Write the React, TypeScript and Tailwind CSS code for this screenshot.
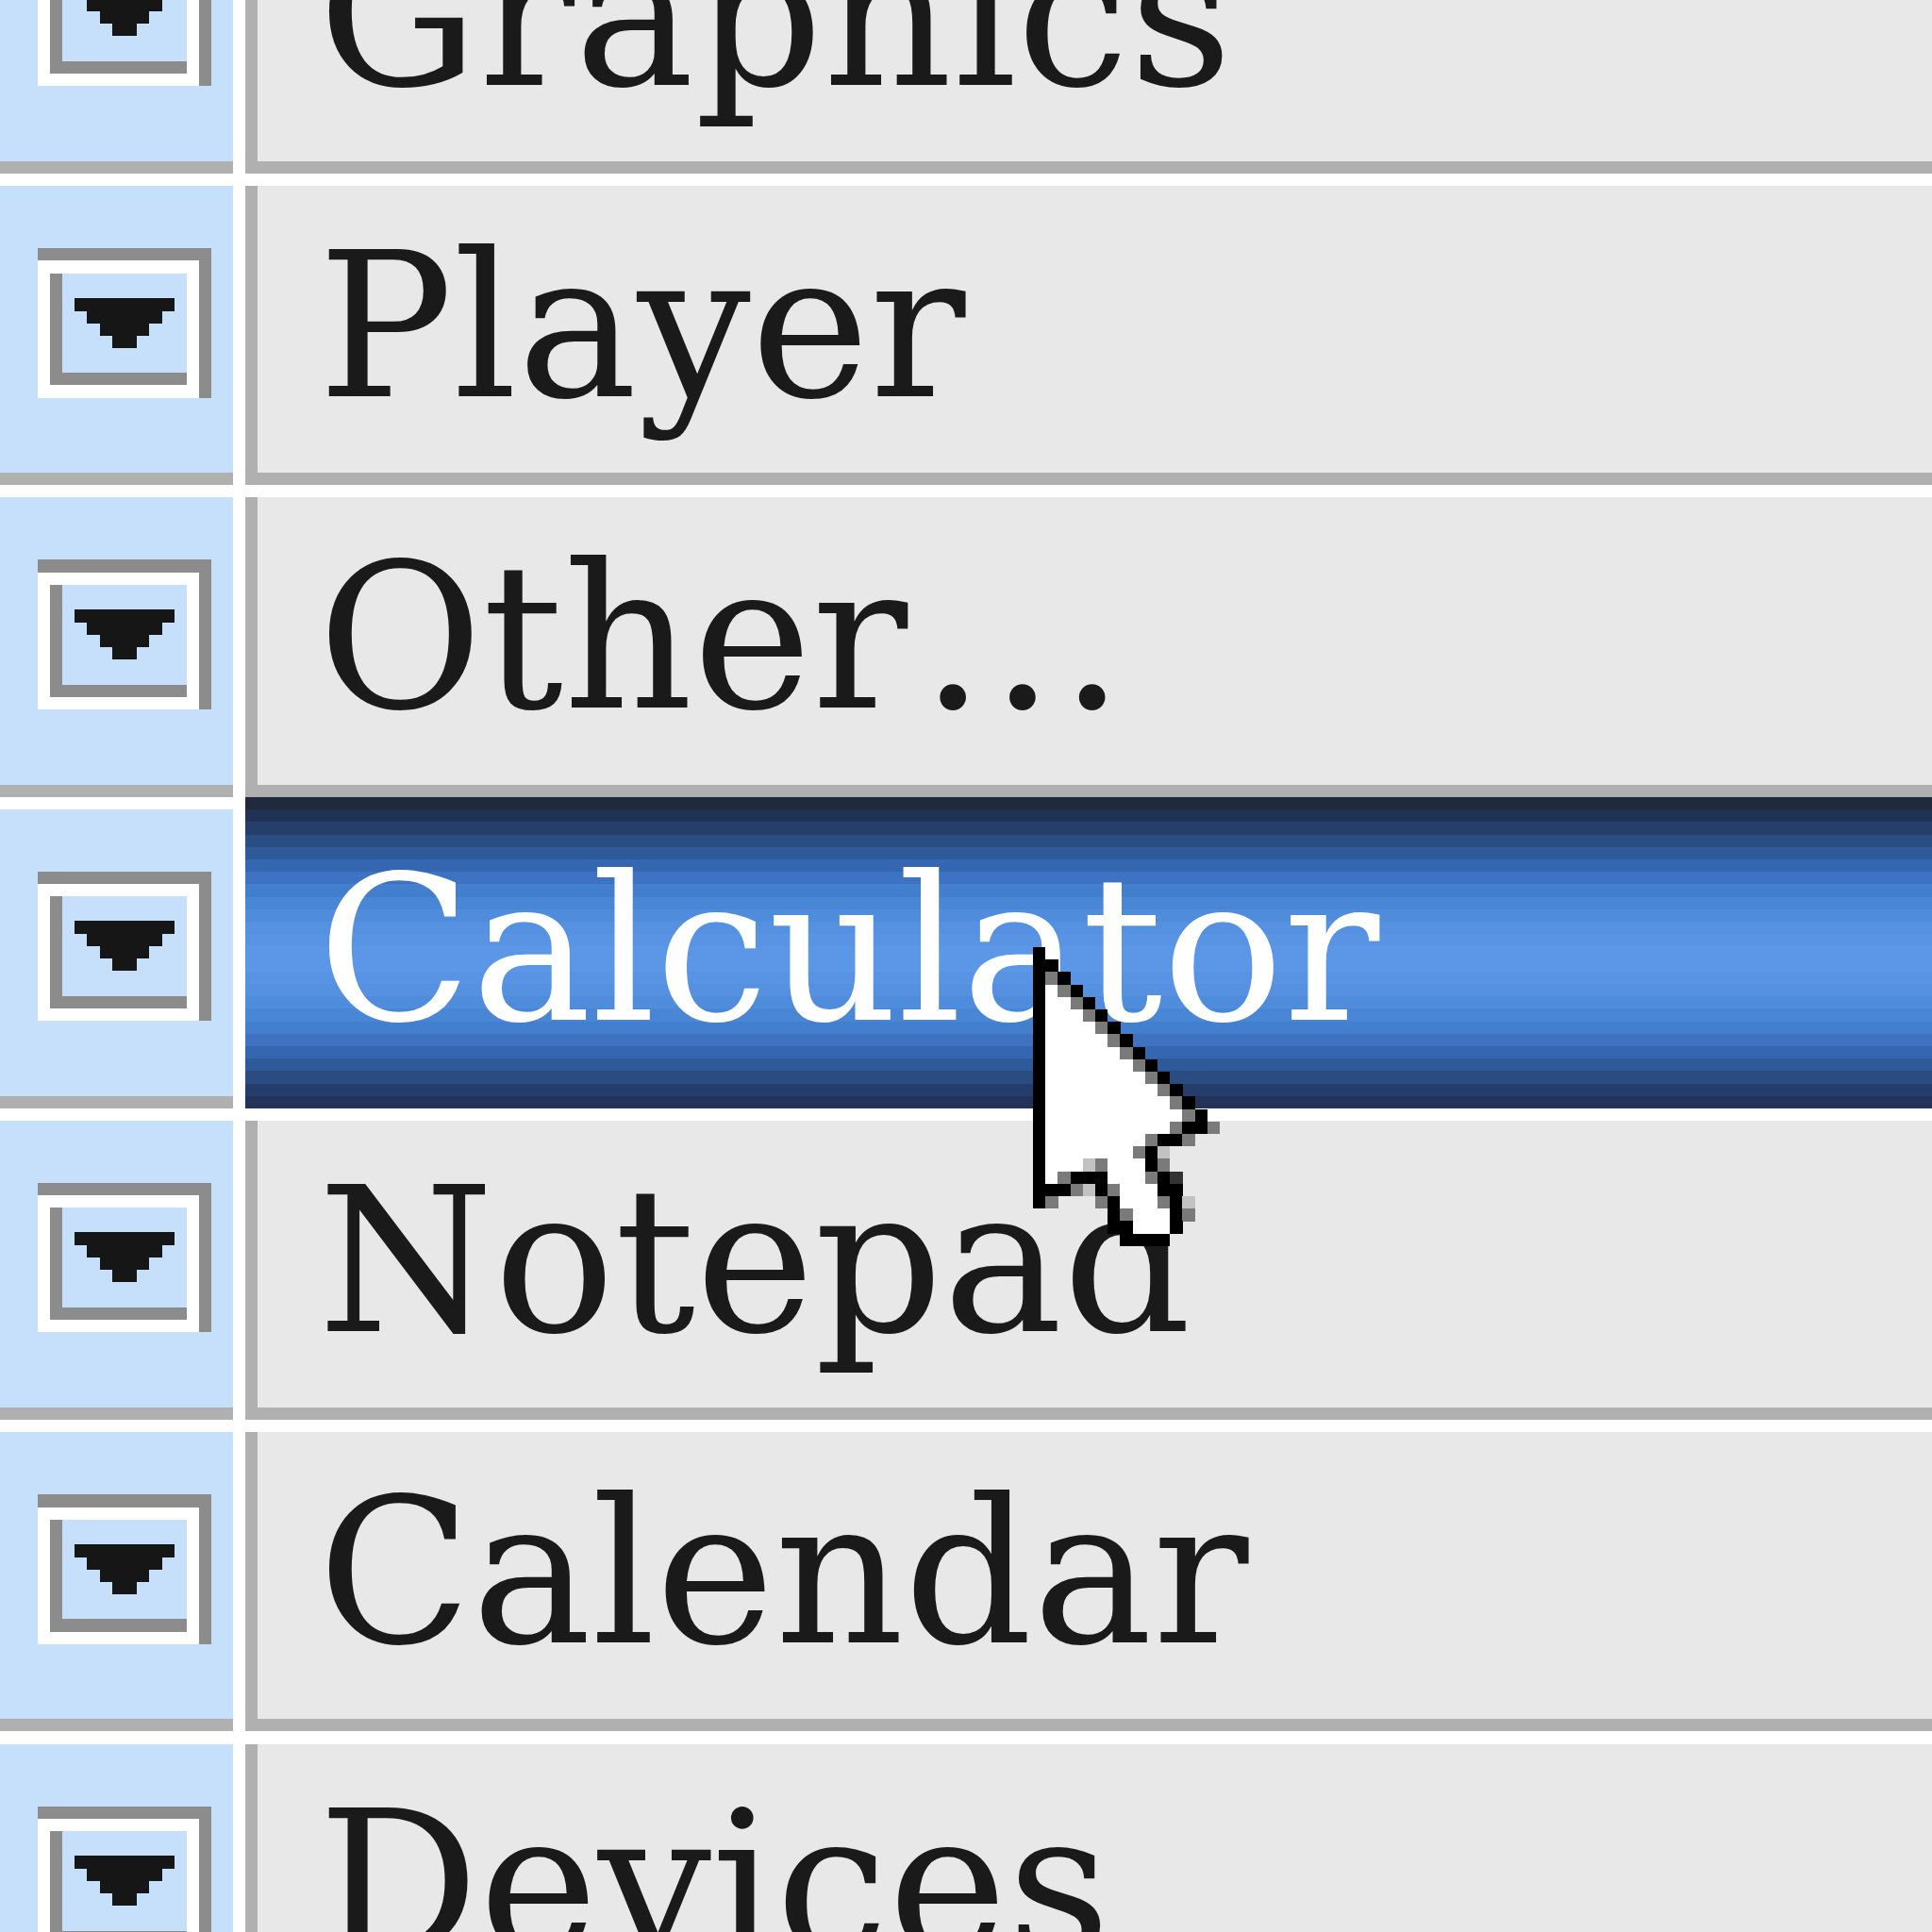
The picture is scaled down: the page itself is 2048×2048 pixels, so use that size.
const ITEMS = ["Graphics", "Player", "Other...", "Calculator", "Notepad", "Calendar", "Devices"]
const ACTIVE = "Calculator"

// pixel map of the mouse pointer, one char per screen pixel
const CURSOR = [
  "B",
  "BB",
  "BGB",
  "BWGB",
  "BWWGB",
  "BWWWGB",
  "BWWWWGB",
  "BWWWWWGB",
  "BWWWWWWGB",
  "BWWWWWWWGB",
  "BWWWWWWWWGB",
  "BWWWWWWWWWGB",
  "BWWWWWWWWWWGB",
  "BWWWWWWWWWWWGB",
  "BWWWWWWWWWWGBBG",
  "BWWWWWWWWGBBG",
  "BWWWWWWWGBL",
  "BWWWLGWWWBG",
  "BWGBBBWWWGBD",
  "BBBGLBGWWWBB",
  "BG...GBWWWGBL",
  "......BGWWWBG",
  "......BBWWWB",
  ".......BBBB",
]

const SHADE: Record<string, string> = {
  B: "#000000",
  W: "#ffffff",
  G: "#7a7a7a",
  L: "#c2c2c2",
  D: "#333333",
}

function Cursor() {
  const cells: React.ReactNode[] = []
  CURSOR.forEach((row, y) =>
    row.split("").forEach((c, x) => {
      if (c !== ".") cells.push(<rect key={`${x}-${y}`} x={x} y={y} width={1.02} height={1.02} fill={SHADE[c]} />)
    })
  )
  return (
    <svg viewBox="0 0 15 24" width={198} height={316.8} shapeRendering="crispEdges" className="absolute left-[1095px] top-[1004px]">
      {cells}
    </svg>
  )
}

function DropButton() {
  return (
    <div className="w-[184.8px] h-[158.4px] bg-[#8c8c8c] pt-[13.2px] pr-[13.2px]">
      <div className="h-full w-full bg-white p-[13.2px]">
        <div className="h-full w-full bg-[#8c8c8c] pl-[13.2px] pb-[13.2px]">
          <div className="h-full w-full bg-[#c6e0fc]">
            <svg viewBox="0 0 10 8" width={132} height={105.6} shapeRendering="crispEdges">
              <path d="M1 2H9V3H8V4H7V5H6V6H4V5H3V4H2V3H1Z" fill="#161616" />
            </svg>
          </div>
        </div>
      </div>
    </div>
  )
}

function Label({ text, light }: { text: string; light?: boolean }) {
  const dots = text.endsWith("...")
  const word = dots ? text.slice(0, -3) : text
  return (
    <span className={`block font-['DejaVu_Serif',serif] text-[213px] leading-none whitespace-nowrap ${light ? "text-white" : "text-[#1a1a1a]"}`}>
      {word}
      {dots && <span className="ml-[14px] tracking-[6px]">...</span>}
    </span>
  )
}

function Row({ label }: { label: string }) {
  const active = label === ACTIVE
  return (
    <div className="flex h-[330.3px]">
      <div className="mt-[13.2px] w-[247px] shrink-0 border-b-[13.2px] border-[#b0b0b0] bg-[#c6e0fc] pl-[39.6px] pt-[66px]">
        <DropButton />
      </div>
      {active ? (
        <div className="ml-[13px] flex-1 bg-[linear-gradient(to_bottom,#1f2a3d_0%_4%,#213253_4%_8%,#243f69_8%_12%,#2a4d83_12%_16%,#2f5a9a_16%_20%,#3566b1_20%_24%,#3e72c2_24%_28%,#447fcf_28%_32%,#4a86d6_32%_36%,#508cdc_36%_40%,#5591e0_40%_44%,#5994e4_44%_48%,#5c96e6_48%_52%,#5c96e6_52%_56%,#5994e4_56%_60%,#5591e0_60%_64%,#508cdc_64%_68%,#4a86d6_68%_72%,#447fcf_72%_76%,#3f73c2_76%_80%,#3566b0_80%_84%,#2f5a99_84%_88%,#2a4c80_88%_92%,#243d6a_92%_96%,#223258_96%_100%)] pl-[77px] pt-[56px]">
          <Label text={label} light />
        </div>
      ) : (
        <div className="ml-[13px] mt-[13.2px] flex-1 border-l-[13.2px] border-b-[13.2px] border-[#b0b0b0] bg-[#e8e8e8] pl-[64px] pt-[43px]">
          <Label text={label} />
        </div>
      )}
    </div>
  )
}

export default function App() {
  return (
    <div className="relative h-[2048px] w-[2048px] overflow-hidden bg-white">
      <div className="mt-[-146.3px]">
        {ITEMS.map((item) => (
          <Row key={item} label={item} />
        ))}
      </div>
      <Cursor />
    </div>
  )
}
